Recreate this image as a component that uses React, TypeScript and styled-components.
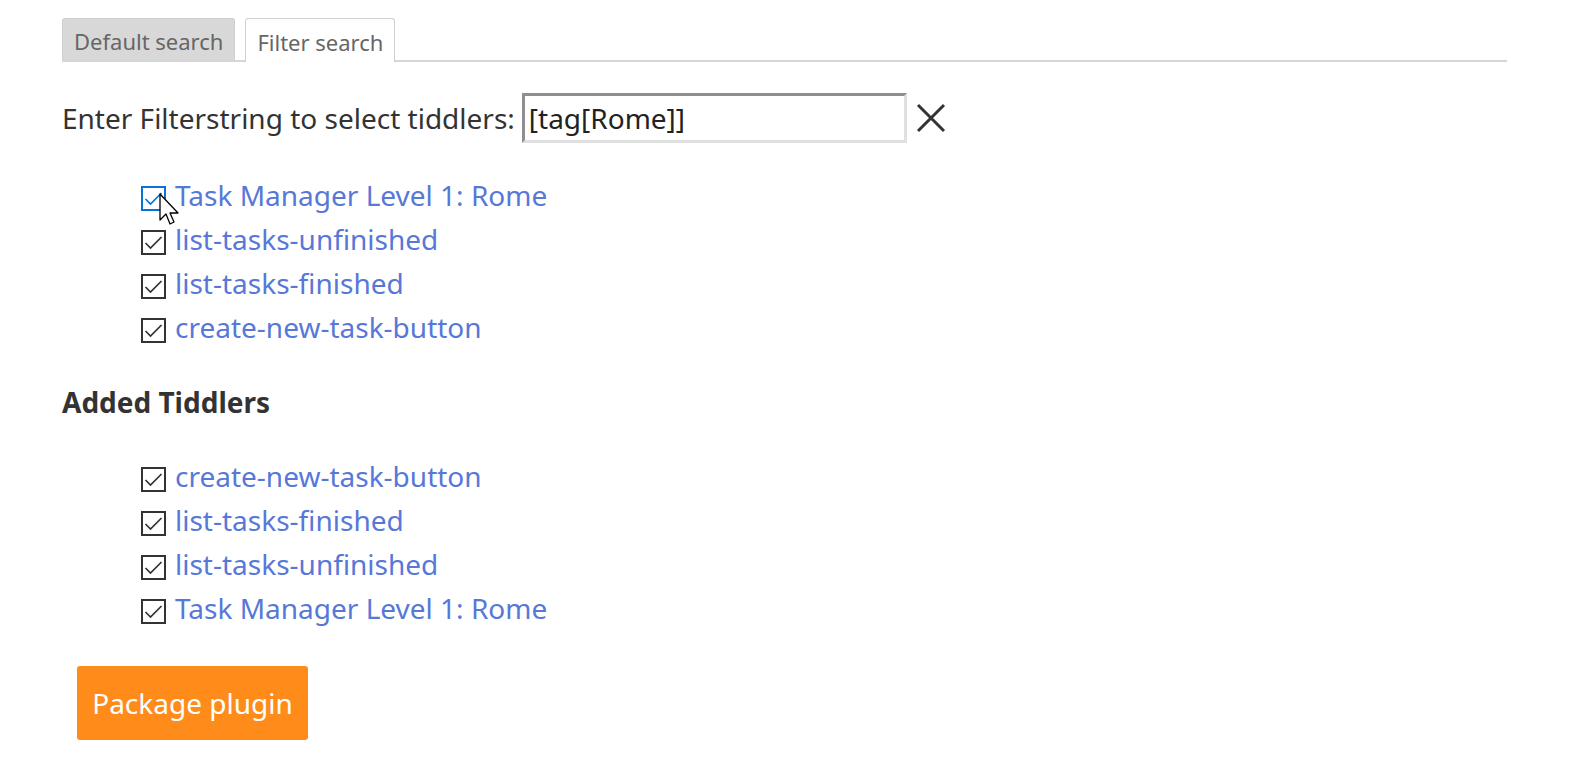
import React, { useState } from "react";
import styled, { createGlobalStyle } from "styled-components";

const GlobalStyle = createGlobalStyle`
  body {
    margin: 0;
    background: #fff;
    font-family: "Noto Sans", "Open Sans", sans-serif;
    color: #333;
  }
`;

const Page = styled.div`
  padding: 18px 65px 30px 62px;
`;

const TabBar = styled.div`
  display: flex;
  align-items: flex-end;
  gap: 10px;
  height: 42px;
  border-bottom: 2px solid #d6d6d6;
`;

const Tab = styled.button<{ $active?: boolean }>`
  font-family: inherit;
  font-size: 22px;
  color: #666;
  height: ${(p) => (p.$active ? "44px" : "42px")};
  margin-bottom: ${(p) => (p.$active ? "-2px" : "0")};
  padding: 3px 11px 0;
  background: ${(p) => (p.$active ? "#fff" : "#d8d8d8")};
  border: 1px solid ${(p) => (p.$active ? "#d0d0d0" : "#cfcfcf")};
  border-bottom: none;
  border-radius: 3px 3px 0 0;
  cursor: pointer;
`;

const FilterRow = styled.div`
  display: flex;
  align-items: center;
  margin-top: 31px;
  font-size: 28px;
`;

const Label = styled.span`
  margin-right: 7px;
`;

const FilterInput = styled.input`
  width: 385px;
  height: 50px;
  box-sizing: border-box;
  padding: 0 4px;
  font-family: inherit;
  font-size: 28px;
  color: #222;
  border-style: solid;
  border-width: 3px;
  border-color: #8f8f8f #e0e0e0 #e0e0e0 #8f8f8f;
  outline: none;
`;

const ClearButton = styled.button`
  margin-left: 6px;
  background: none;
  border: none;
  padding: 0;
  width: 36px;
  height: 36px;
  display: flex;
  align-items: center;
  justify-content: center;
  cursor: pointer;
`;

const List = styled.ul`
  list-style: none;
  margin: 0;
  padding: 0 0 0 79px;
  font-size: 28px;
  line-height: 44px;
`;

const FirstList = styled(List)`
  margin-top: 30px;
`;

const Item = styled.li`
  display: flex;
  align-items: center;
  position: relative;
`;

const Box = styled.span<{ $hover?: boolean }>`
  width: 21px;
  height: 21px;
  margin: 6px 9px 0 0;
  border: 2px solid ${(p) => (p.$hover ? "#0a74d6" : "#333")};
  display: flex;
  align-items: center;
  justify-content: center;
  flex-shrink: 0;
`;

const Link = styled.a`
  color: #5778d8;
  text-decoration: none;
`;

const Heading = styled.h2`
  font-size: 28px;
  line-height: 34px;
  font-weight: 700;
  margin: 36px 0 35px;
`;

const Cursor = styled.svg`
  position: absolute;
  left: 18px;
  top: 20px;
  pointer-events: none;
`;

const PackageButton = styled.button`
  margin: 36px 0 0 15px;
  width: 231px;
  height: 74px;
  background: #ff8c1a;
  color: #fff;
  border: none;
  border-radius: 3px;
  font-family: inherit;
  font-size: 28px;
  cursor: pointer;
`;

const Check = ({ hover }: { hover?: boolean }) => (
  <Box $hover={hover}>
    <svg width="21" height="21" viewBox="0 0 21 21">
      <path
        d="M2.5 11 L7.5 16 L18.5 5"
        fill="none"
        stroke={hover ? "#0a74d6" : "#333"}
        strokeWidth="1.7"
      />
    </svg>
  </Box>
);

const found = [
  "Task Manager Level 1: Rome",
  "list-tasks-unfinished",
  "list-tasks-finished",
  "create-new-task-button",
];

const added = [
  "create-new-task-button",
  "list-tasks-finished",
  "list-tasks-unfinished",
  "Task Manager Level 1: Rome",
];

export default function App() {
  const [filter, setFilter] = useState("[tag[Rome]]");
  return (
    <Page>
      <GlobalStyle />
      <TabBar>
        <Tab>Default search</Tab>
        <Tab $active>Filter search</Tab>
      </TabBar>
      <FilterRow>
        <Label>Enter Filterstring to select tiddlers:</Label>
        <FilterInput value={filter} onChange={(e) => setFilter(e.target.value)} />
        <ClearButton onClick={() => setFilter("")}>
          <svg width="32" height="32" viewBox="0 0 32 32">
            <path d="M3 3 L29 29 M29 3 L3 29" stroke="#333" strokeWidth="3" />
          </svg>
        </ClearButton>
      </FilterRow>
      <FirstList>
        {found.map((t, i) => (
          <Item key={t}>
            <Check hover={i === 0} />
            <Link href="#">{t}</Link>
            {i === 0 && (
              <Cursor width="24" height="36" viewBox="0 0 24 36">
                <path
                  d="M1 1 L1 27 L7 21 L11 31 L15 29 L11 20 L19 20 Z"
                  fill="#fff"
                  stroke="#000"
                  strokeWidth="1.3"
                  strokeLinejoin="round"
                />
              </Cursor>
            )}
          </Item>
        ))}
      </FirstList>
      <Heading>Added Tiddlers</Heading>
      <List>
        {added.map((t) => (
          <Item key={t}>
            <Check />
            <Link href="#">{t}</Link>
          </Item>
        ))}
      </List>
      <PackageButton>Package plugin</PackageButton>
    </Page>
  );
}
